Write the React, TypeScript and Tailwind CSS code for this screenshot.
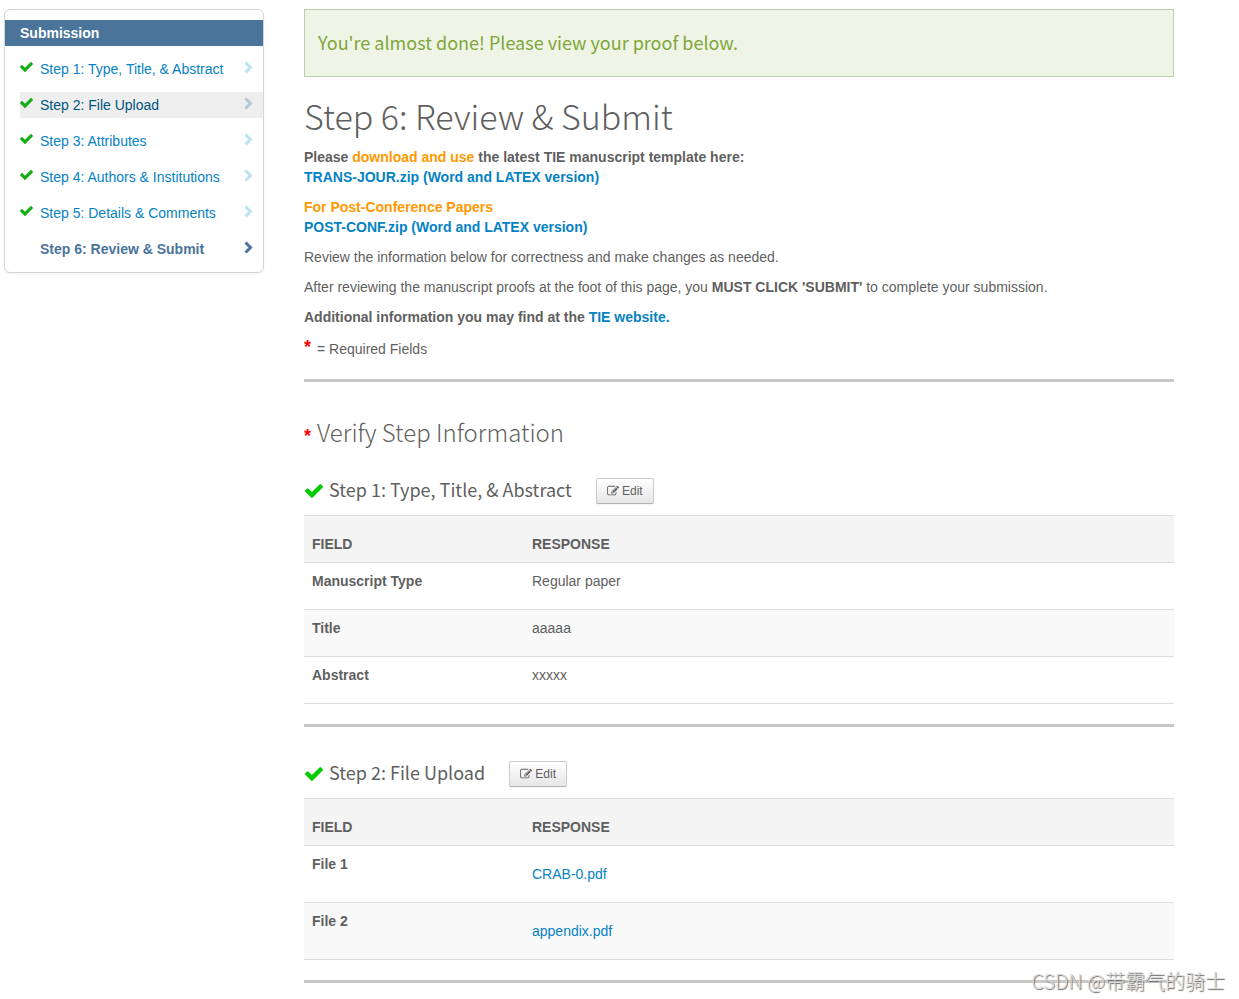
import type { ReactNode } from "react";

type Step = { label: string; done?: boolean; hovered?: boolean; current?: boolean };
type Row = { field: string; response: string; isFile?: boolean };

const steps: Step[] = [
  { label: "Step 1: Type, Title, & Abstract", done: true },
  { label: "Step 2: File Upload", done: true, hovered: true },
  { label: "Step 3: Attributes", done: true },
  { label: "Step 4: Authors & Institutions", done: true },
  { label: "Step 5: Details & Comments", done: true },
  { label: "Step 6: Review & Submit", current: true },
];

const typeRows: Row[] = [
  { field: "Manuscript Type", response: "Regular paper" },
  { field: "Title", response: "aaaaa" },
  { field: "Abstract", response: "xxxxx" },
];

const fileRows: Row[] = [
  { field: "File 1", response: "CRAB-0.pdf", isFile: true },
  { field: "File 2", response: "appendix.pdf", isFile: true },
];

function CheckIcon({ className }: { className: string }) {
  return (
    <svg className={className} viewBox="121 334 1550 1188" fill="currentColor" aria-hidden="true">
      <path d="M1671 566q0 40-28 68l-724 724-136 136q-28 28-68 28t-68-28l-136-136-362-362q-28-28-28-68t28-68l136-136q28-28 68-28t68 28l294 295 656-657q28-28 68-28t68 28l136 136q28 28 28 68z" />
    </svg>
  );
}

function ChevronIcon({ className }: { className: string }) {
  return (
    <svg className={className} viewBox="0 0 9 13" fill="none" stroke="currentColor" strokeWidth="3" aria-hidden="true">
      <path d="M1.5 1.5L6.5 6.5L1.5 11.5" />
    </svg>
  );
}

function EditIcon() {
  return (
    <svg className="h-3 w-3" viewBox="0 0 1792 1792" fill="currentColor" aria-hidden="true">
      <path d="M888 1184l116-116-152-152-116 116v56h96v96h56zm440-720q-16-16-33 1l-350 350q-17 17-1 33t33-1l350-350q17-17 1-33zm80 594v190q0 119-84.5 203.5t-203.5 84.5h-832q-119 0-203.5-84.5t-84.5-203.5v-832q0-119 84.5-203.5t203.5-84.5h832q63 0 117 25 15 7 18 23 3 17-9 29l-49 49q-14 14-32 8-23-6-45-6h-832q-66 0-113 47t-47 113v832q0 66 47 113t113 47h832q66 0 113-47t47-113v-126q0-13 9-22l64-64q15-15 35-7t20 29zm-96-738l288 288-672 672h-288v-288zm444 132l-92 92-288-288 92-92q28-28 68-28t68 28l152 152q28 28 28 68t-28 68z" />
    </svg>
  );
}

function Sidebar() {
  return (
    <nav className="w-[260px] shrink-0 rounded-md border border-[#d5d5d5] py-2.5 shadow-xs">
      <h2 className="bg-[#4b749b] pl-[15px] leading-[26px] font-bold text-white">Submission</h2>
      <ul className="mt-2.5 flex flex-col gap-2.5 pl-[15px]">
        {steps.map((step) => (
          <li key={step.label} className={step.hovered ? "bg-[#eeeeee]" : ""}>
            <a
              href="#"
              className={`flex h-[26px] items-center pr-2.5 ${
                step.current ? "font-bold text-[#4b749b]" : step.hovered ? "text-[#005580]" : "text-[#0582c4]"
              }`}
            >
              <span className="w-5 pb-1">{step.done && <CheckIcon className="h-2.5 w-[13px] text-[#13ad13]" />}</span>
              <span className="flex-1">{step.label}</span>
              <ChevronIcon
                className={`mb-1 h-[13px] w-[9px] ${
                  step.current ? "text-[#4b749b]" : step.hovered ? "text-[#b4c8d3]" : "text-[#bfe0ef]"
                }`}
              />
            </a>
          </li>
        ))}
      </ul>
    </nav>
  );
}

function Divider() {
  return <hr className="mt-5 border-0 border-t-[3px] border-[#c8c8c8]" />;
}

function StepSection({ title, rows }: { title: string; rows: Row[] }) {
  return (
    <section>
      <div className="flex h-[26px] items-center">
        <CheckIcon className="ml-px h-3.5 w-[18px] text-[#00cc00]" />
        <h3 className="ml-1.5 pb-1 font-['Noto_Sans_CJK_SC',sans-serif] text-lg leading-6">{title}</h3>
        <button
          type="button"
          className="ml-6 flex h-[26px] w-[58px] items-center justify-center gap-[3px] rounded-xs border border-[#cccccc] border-b-[#b3b3b3] bg-linear-to-b from-white to-[#e6e6e6] text-xs shadow-xs"
        >
          <EditIcon />
          Edit
        </button>
      </div>
      <table className="mt-[11px] w-full border-collapse text-left">
        <thead>
          <tr className="h-[47px] border-y border-[#dddddd] bg-[#f4f4f4] align-bottom">
            <th className="w-[220px] p-2 font-bold">FIELD</th>
            <th className="p-2 font-bold">RESPONSE</th>
          </tr>
        </thead>
        <tbody>
          {rows.map((row) => (
            <tr key={row.field} className="border-b border-[#dddddd] align-top even:bg-[#f9f9f9]">
              <th scope="row" className="p-2 font-bold">{row.field}</th>
              <td className={row.isFile ? "px-2 py-[18px]" : "px-2 pt-2 pb-[18px]"}>
                {row.isFile ? <Link>{row.response}</Link> : row.response}
              </td>
            </tr>
          ))}
        </tbody>
      </table>
    </section>
  );
}

function Link({ children }: { children: ReactNode }) {
  return <a href="#" className="text-[#0582c4] hover:underline">{children}</a>;
}

export default function App() {
  return (
    <div className="relative flex min-h-screen gap-10 bg-white pt-[9px] pr-[65px] pl-1 font-['Liberation_Sans',Arial,sans-serif] text-sm leading-5 text-[#5f5f5f]">
      <div className="shrink-0">
        <Sidebar />
      </div>

      <main className="min-w-0 flex-1">
        <div className="border border-[#bccfa8] bg-[#eff5e6] px-[13px] pt-[19px] pb-[21px] font-['Noto_Sans_CJK_SC',sans-serif] text-lg leading-[26px] text-[#80a639]">
          You're almost done! Please view your proof below.
        </div>

        <h1 className="mt-[19px] font-['Noto_Sans_CJK_SC',sans-serif] text-[34px] leading-10 font-light">
          Step 6: Review &amp; Submit
        </h1>

        <div className="mt-[11px] flex flex-col gap-2.5">
          <p className="font-bold">
            Please <span className="text-[#ff9900]">download and use</span> the latest TIE manuscript template here:
            <br />
            <Link>TRANS-JOUR.zip (Word and LATEX version)</Link>
          </p>
          <p className="font-bold">
            <span className="text-[#ff9900]">For Post-Conference Papers</span>
            <br />
            <Link>POST-CONF.zip (Word and LATEX version)</Link>
          </p>
          <p>Review the information below for correctness and make changes as needed.</p>
          <p>
            After reviewing the manuscript proofs at the foot of this page, you <b>MUST CLICK 'SUBMIT'</b> to complete
            your submission.
          </p>
          <p className="font-bold">
            Additional information you may find at the <Link>TIE website.</Link>
          </p>
        </div>
        <p className="mt-3 flex gap-1.5">
          <span className="text-lg leading-4 font-bold text-[#ff0000]">*</span>= Required Fields
        </p>

        <Divider />

        {/* Verify steps */}
        <h2 className="mt-8 mb-7 flex items-center gap-1.5 font-['Noto_Sans_CJK_SC',sans-serif] text-2xl leading-[30px] font-light">
          <span className="pt-2 font-['Liberation_Sans',Arial,sans-serif] text-lg font-bold text-[#ff0000]">*</span>
          Verify Step Information
        </h2>
        <StepSection title="Step 1: Type, Title, & Abstract" rows={typeRows} />
        <Divider />
        <div className="mt-[34px]">
          <StepSection title="Step 2: File Upload" rows={fileRows} />
        </div>
        <Divider />
      </main>

      {/* Watermark */}
      <div className="absolute right-3.5 bottom-1 font-['Noto_Sans_CJK_SC',sans-serif] text-xl leading-7 font-light text-[#dcdcdc] [text-shadow:1px_1px_1px_#666666]">
        CSDN @带霸气的骑士
      </div>
    </div>
  );
}
